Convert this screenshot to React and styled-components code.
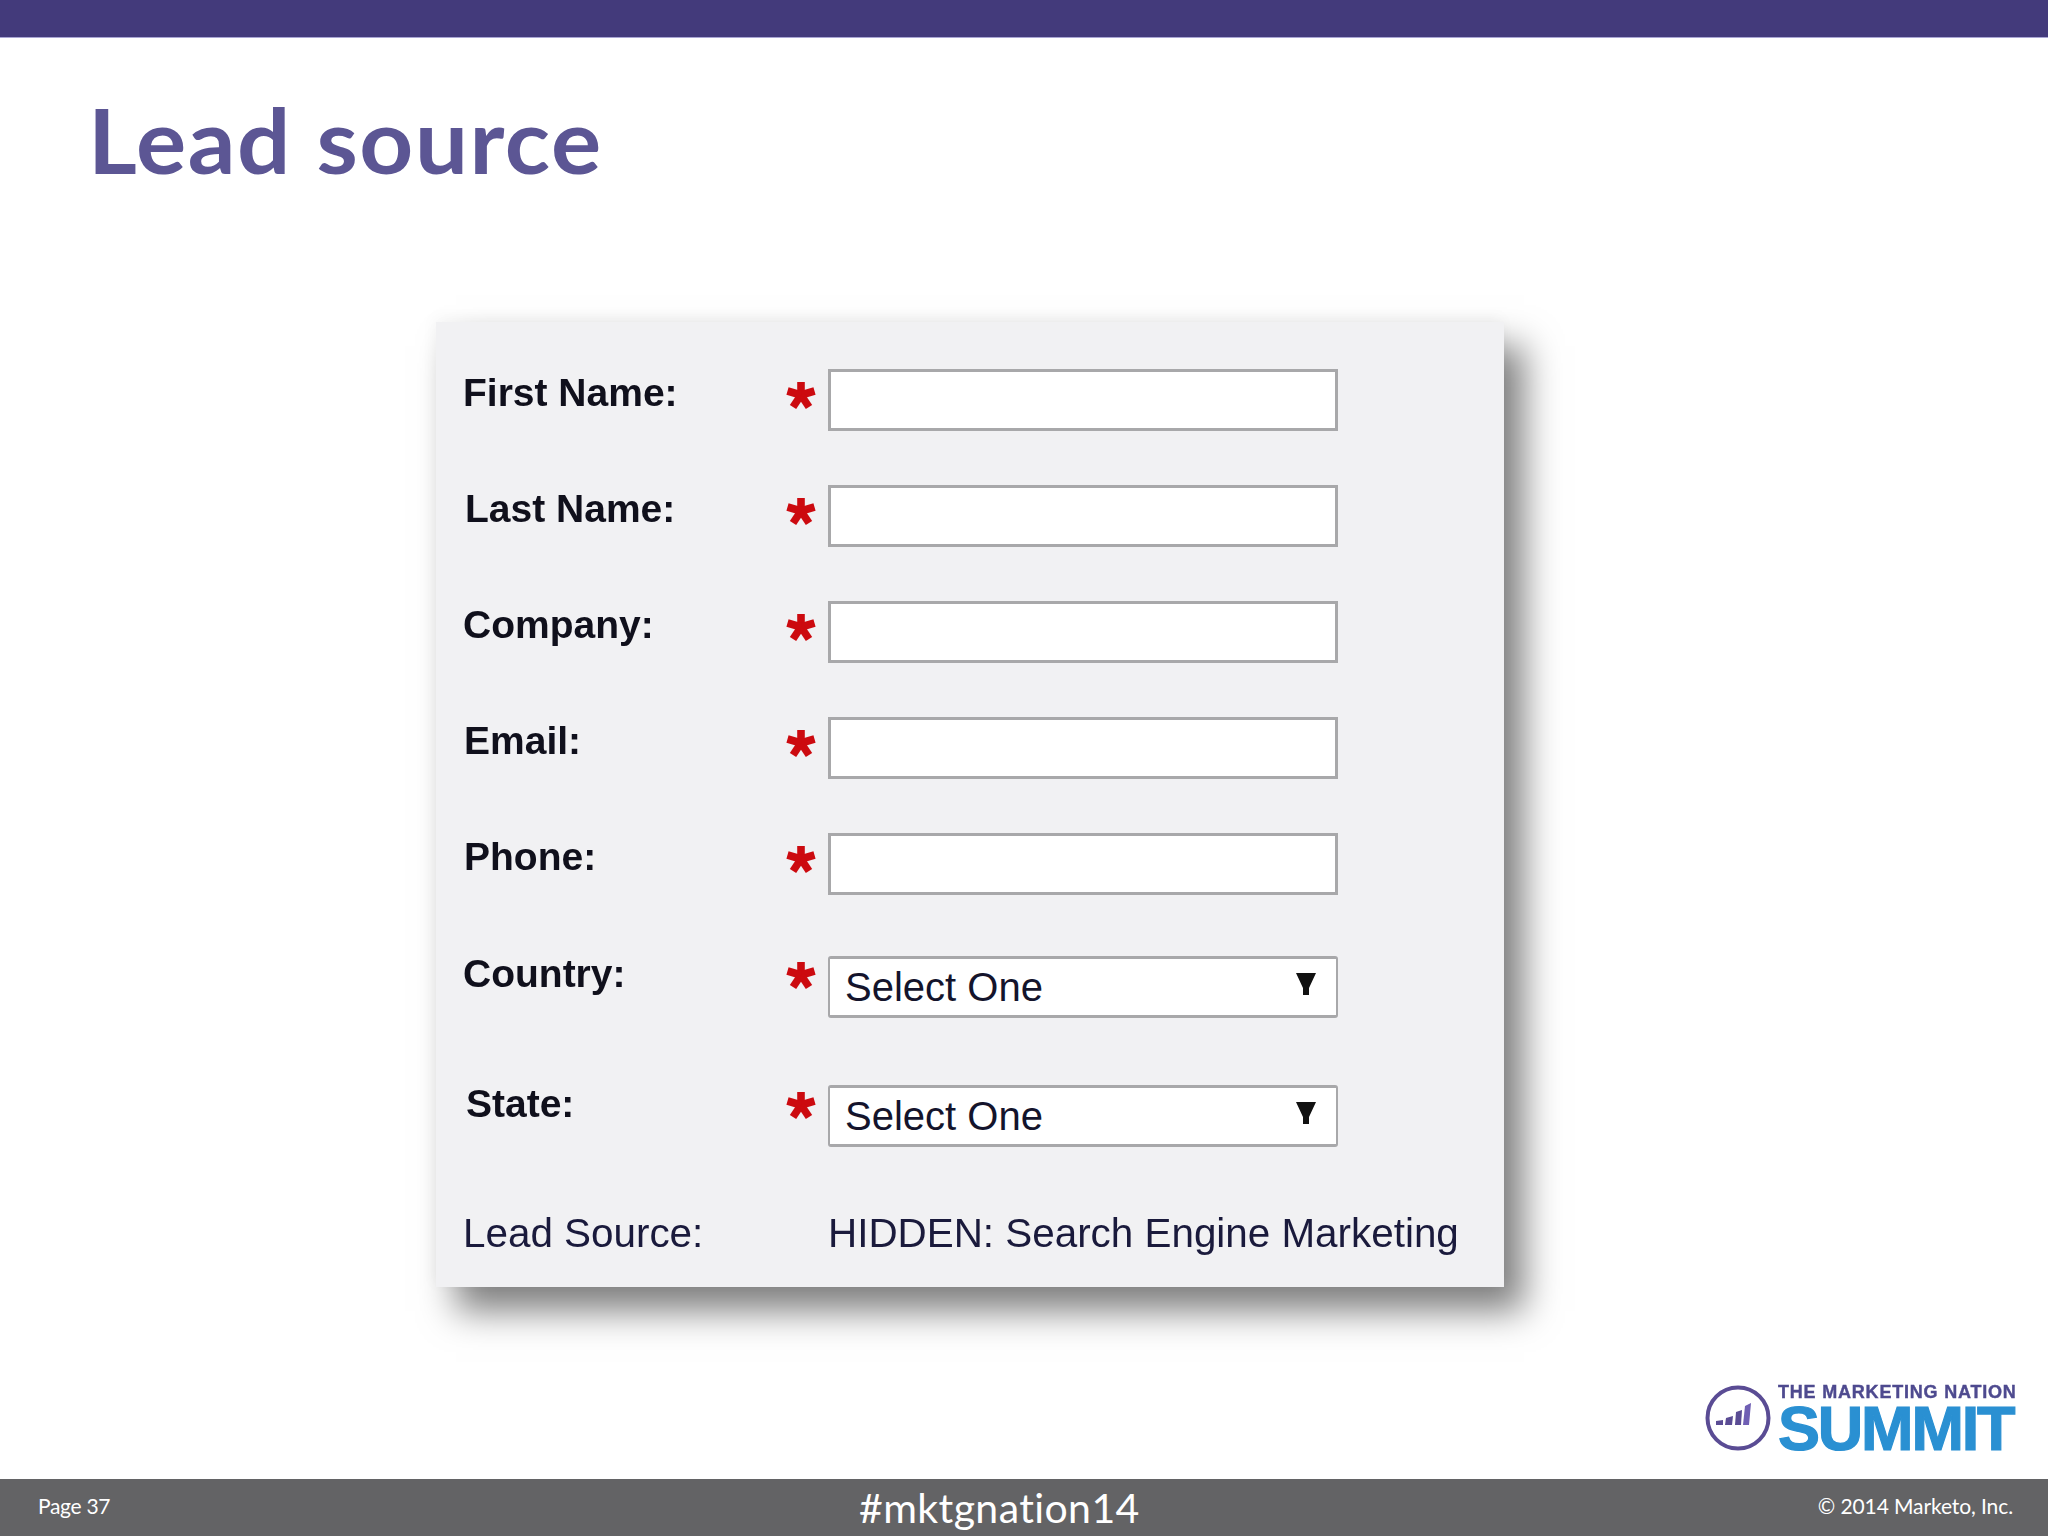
import styled, { createGlobalStyle } from "styled-components";

const Global = createGlobalStyle`
  html, body { margin: 0; padding: 0; background: #fff; }
  #root { width: 2048px; height: 1536px; overflow: hidden; }
`;

const Slide = styled.div`
  width: 2048px;
  height: 1536px;
  display: flex;
  flex-direction: column;
  background: #fff;
  font-family: "Liberation Sans", Arial, sans-serif;
`;

const TopBar = styled.div`
  height: 37px;
  flex: none;
  background: #433a7b;
  border-bottom: 1px solid #a9a5d4;
`;

const Title = styled.h1`
  margin: 36px 0 0 88px;
  height: 130px;
  font-family: Lato, "Open Sans", sans-serif;
  font-weight: 700;
  font-size: 90px;
  line-height: 130px;
  letter-spacing: 1.5px;
  color: #5c5694;
  transform: scaleX(1.045);
  transform-origin: left center;
`;

const Panel = styled.section`
  margin: 118px 0 0 436px;
  width: 1068px;
  height: 965px;
  flex: none;
  box-sizing: border-box;
  padding: 47px 0 0 27px;
  background: #f1f1f3;
  box-shadow: 20px 24px 34px rgba(0, 0, 0, 0.5), -2px -4px 14px rgba(0, 0, 0, 0.04);
`;

const Row = styled.div`
  display: grid;
  grid-template-columns: 322px 43px 510px;
  align-items: start;
  margin-top: ${(p) => p.$gap || 0}px;
  filter: blur(0.55px);
`;

const Label = styled.label`
  margin-top: ${(p) => p.$top}px;
  padding-left: ${(p) => p.$indent || 0}px;
  font-size: ${(p) => (p.$plain ? 40.4 : 39)}px;
  line-height: 42px;
  font-weight: ${(p) => (p.$plain ? 400 : 700)};
  color: ${(p) => (p.$plain ? "#1a1a3c" : "#10101c")};
  white-space: nowrap;
`;

const Star = styled.svg`
  display: block;
  width: 30px;
  height: 30px;
  margin: ${(p) => p.$top}px 0 0 1px;
`;

const TextInput = styled.input`
  display: block;
  box-sizing: border-box;
  width: 510px;
  height: 62px;
  margin: 0;
  padding: 0;
  background: #fff;
  border: 3.5px solid #a8a8aa;
  border-radius: 0;
  outline: none;
`;

const Select = styled.div`
  box-sizing: border-box;
  width: 510px;
  height: 62px;
  display: flex;
  align-items: center;
  justify-content: space-between;
  padding: 0 20px 0 15px;
  background: #fff;
  border-style: solid;
  border-color: #a8a8aa;
  border-width: 3.5px 2px;
  border-radius: 3px;
  font-size: 40px;
  line-height: 42px;
  color: #14142c;
`;

const Value = styled.div`
  font-size: 40.4px;
  line-height: 42px;
  color: #1a1a3c;
  white-space: nowrap;
`;

const Arrow = styled.svg`
  display: block;
  width: 20px;
  height: 22px;
  margin-top: -7px;
`;

const Logo = styled.div`
  align-self: flex-end;
  margin: 96px 34px 0 0;
  display: flex;
  align-items: center;
  gap: 6px;
  filter: blur(0.7px);
`;

const LogoText = styled.div`
  display: flex;
  flex-direction: column;
  width: 236px;
`;

const LogoTop = styled.div`
  font-size: 18px;
  line-height: 18px;
  font-weight: 700;
  letter-spacing: 0.8px;
  color: #4e4a8f;
  -webkit-text-stroke: 0.4px #4e4a8f;
  white-space: nowrap;
`;

const LogoMain = styled.div`
  margin-top: 2px;
  font-size: 63px;
  line-height: 50px;
  font-weight: 700;
  letter-spacing: -2.2px;
  color: #2a90d2;
  -webkit-text-stroke: 1.2px #2a90d2;
  white-space: nowrap;
`;

const Footer = styled.footer`
  margin-top: auto;
  height: 57px;
  flex: none;
  display: grid;
  grid-template-columns: 821px auto 1fr;
  align-items: center;
  padding: 0 35px 0 38px;
  box-sizing: border-box;
  background: #636365;
  color: #fff;
  font-family: Lato, "Open Sans", sans-serif;
`;

const PageNo = styled.div`
  margin-top: -4px;
  font-size: 21px;
  letter-spacing: -0.3px;
`;

const Hashtag = styled.div`
  font-size: 41px;
  line-height: 57px;
  letter-spacing: 0.4px;
`;

const Copy = styled.div`
  margin-top: -4px;
  justify-self: end;
  font-size: 21px;
  letter-spacing: -0.1px;
`;

const RequiredStar = ({ top }) => (
  <Star $top={top} viewBox="0 0 30 30">
    <g stroke="#cc0a0f" strokeWidth="7.6" strokeLinecap="butt">
      <line x1="15" y1="15" x2="15" y2="2" />
      <line x1="15" y1="15" x2="28.5" y2="11" />
      <line x1="15" y1="15" x2="23" y2="27" />
      <line x1="15" y1="15" x2="7" y2="27" />
      <line x1="15" y1="15" x2="1.5" y2="11" />
    </g>
  </Star>
);

const textRows = [
  { label: "First Name:", gap: 0, indent: 0 },
  { label: "Last Name:", gap: 54, indent: 2 },
  { label: "Company:", gap: 54, indent: 0 },
  { label: "Email:", gap: 54, indent: 1 },
  { label: "Phone:", gap: 54, indent: 1 },
];

const selectRows = [
  { label: "Country:", gap: 61, top: -3, starTop: 4, indent: 0 },
  { label: "State:", gap: 67, top: -2, starTop: 5, indent: 3 },
];

const SummitLogo = () => (
  <svg width="68" height="68" viewBox="0 0 68 68">
    <circle cx="34" cy="34" r="30.5" fill="none" stroke="#5a4c94" strokeWidth="4" />
    <g fill="#5a4c94">
      <polygon points="12,37 19,36 19,41 12,41" />
      <polygon points="22,34 29,32 28,41 21,41" />
      <polygon points="32,28 38,26 37,41 31,41" />
      <polygon points="41,22 47,19 45,41 39,41" fill="#6f5fb4" />
    </g>
  </svg>
);

export default function App() {
  return (
    <Slide>
      <Global />
      <TopBar />
      <Title>Lead source</Title>
      <Panel>
        {textRows.map((r) => (
          <Row key={r.label} $gap={r.gap}>
            <Label $top={3} $indent={r.indent}>{r.label}</Label>
            <RequiredStar top={11} />
            <TextInput type="text" />
          </Row>
        ))}
        {selectRows.map((r) => (
          <Row key={r.label} $gap={r.gap}>
            <Label $top={r.top} $indent={r.indent}>{r.label}</Label>
            <RequiredStar top={r.starTop} />
            <Select>
              Select One
              <Arrow viewBox="0 0 20 22">
                <polygon points="0,0 20,0 13,15 13,22 7,22 7,15" fill="#111" />
              </Arrow>
            </Select>
          </Row>
        ))}
        <Row $gap={65}>
          <Label $top={0} $plain>Lead Source:</Label>
          <span />
          <Value>HIDDEN: Search Engine Marketing</Value>
        </Row>
      </Panel>
      <Logo>
        <SummitLogo />
        <LogoText>
          <LogoTop>THE MARKETING NATION</LogoTop>
          <LogoMain>SUMMIT</LogoMain>
        </LogoText>
      </Logo>
      <Footer>
        <PageNo>Page 37</PageNo>
        <Hashtag>#mktgnation14</Hashtag>
        <Copy>© 2014 Marketo, Inc.</Copy>
      </Footer>
    </Slide>
  );
}
